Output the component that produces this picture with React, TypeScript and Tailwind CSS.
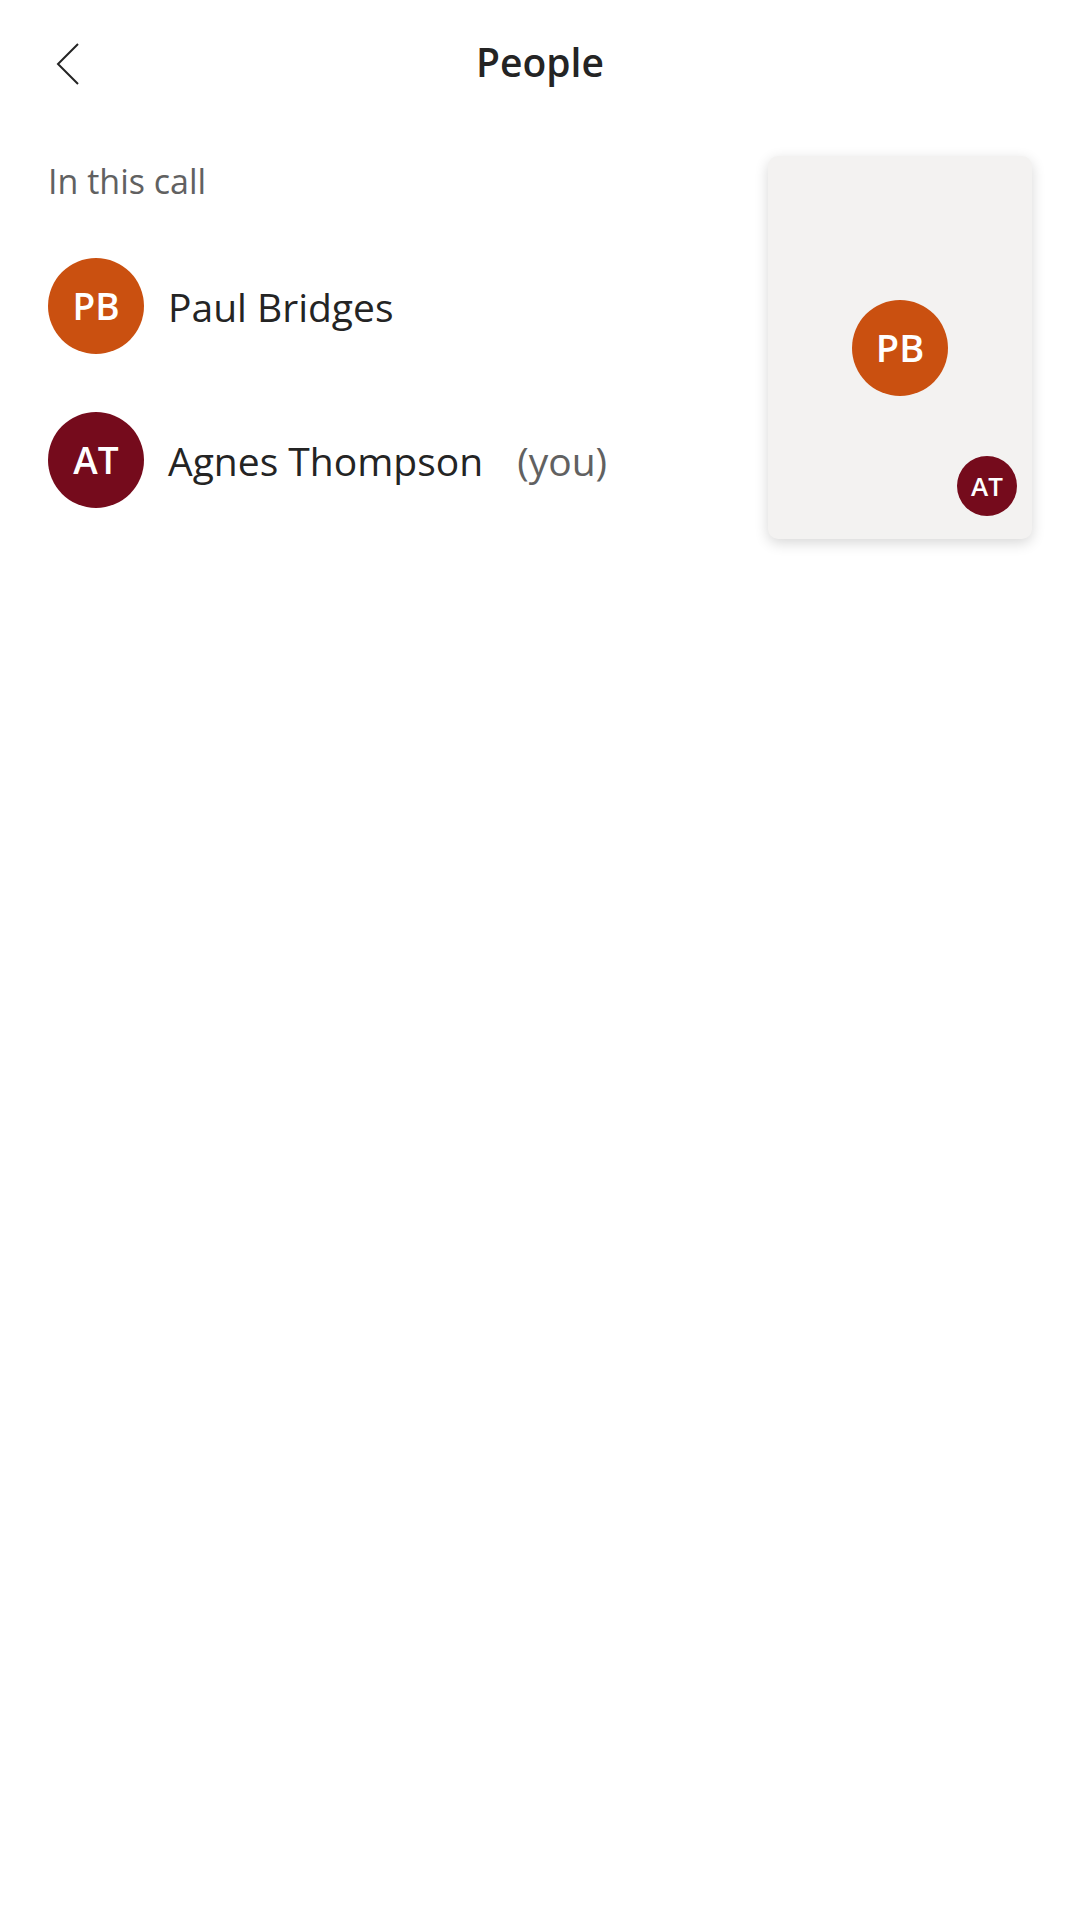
import { ReactNode } from 'react';

const FONT = { fontFamily: '"Open Sans", "Noto Sans", sans-serif' };

interface Person {
  initials: string;
  name: string;
  color: string;
  isYou?: boolean;
}

const people: Person[] = [
  { initials: 'PB', name: 'Paul Bridges', color: 'bg-[#ca5010]' },
  { initials: 'AT', name: 'Agnes Thompson', color: 'bg-[#750b1c]', isYou: true },
];

function Avatar({ className, children }: { className: string; children: ReactNode }) {
  return (
    <div
      className={`rounded-full flex items-center justify-center text-white font-semibold shrink-0 ${className}`}
    >
      {children}
    </div>
  );
}

export default function App() {
  return (
    <div className="w-[1080px] h-[1920px] bg-white text-[#242424]" style={FONT}>
      {/* header */}
      <div className="h-[128px] px-[56px] flex items-center justify-between">
        <button type="button" className="w-[24px] h-[42px] flex items-center">
          <svg width="24" height="42" viewBox="0 0 24 42" fill="none">
            <polyline
              points="22,1 2,21 22,41"
              stroke="#242424"
              strokeWidth="2"
              strokeLinejoin="miter"
            />
          </svg>
        </button>
        <h1 className="text-[39px] font-semibold leading-none mb-[5px]">People</h1>
        <div className="w-[24px]" />
      </div>

      <div className="flex px-12">
        <div className="flex-1">
          <p className="mt-[29px] text-[34px] leading-[48px] text-[#616161]">In this call</p>
          <div className="mt-[53px] flex flex-col gap-[58px]">
            {people.map((p) => (
              <div key={p.initials} className="flex items-center h-[96px]">
                <Avatar className={`w-[96px] h-[96px] text-[37px] ${p.color}`}>{p.initials}</Avatar>
                <span className="ml-[24px] text-[39px] leading-none">{p.name}</span>
                {p.isYou && (
                  <span className="ml-[34px] text-[39px] leading-none text-[#616161]">(you)</span>
                )}
              </div>
            ))}
          </div>
        </div>

        {/* video tile preview */}
        <div className="mt-[28px] w-[264px] h-[383px] rounded-[10px] bg-[#f3f2f1] shadow-[0_4px_14px_rgba(0,0,0,0.16)] relative flex items-center justify-center">
          <Avatar className="w-[96px] h-[96px] text-[38px] bg-[#ca5010]">PB</Avatar>
          <Avatar className="absolute right-[15px] bottom-[23px] w-[60px] h-[60px] text-[26px] bg-[#750b1c]">
            AT
          </Avatar>
        </div>
      </div>
    </div>
  );
}
